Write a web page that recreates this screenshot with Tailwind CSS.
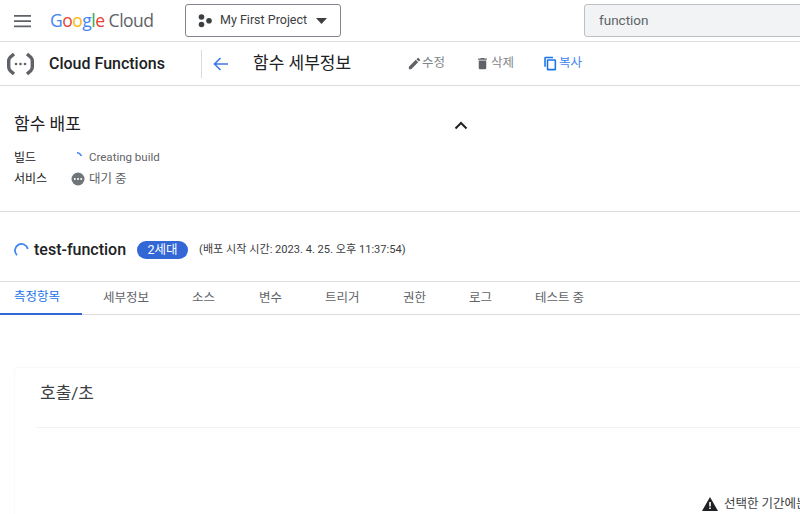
<!DOCTYPE html>
<html lang="ko">
<head>
    <meta charset="UTF-8">
    <title>함수 세부정보</title>
    <script src="https://cdn.jsdelivr.net/npm/@tailwindcss/browser@4"></script>
</head>
<body class="bg-white overflow-hidden h-[514px] w-[800px] text-[#202124] font-['Roboto','Noto_Sans_CJK_KR',sans-serif]">
    <!-- top bar -->
    <header class="h-[42px] border-b border-[#dadce0] flex items-center overflow-hidden">
        <svg class="ml-[14px] w-[18px] h-[14px] shrink-0" viewBox="0 0 18 14"><path fill="#5f6368" d="M0 1h17v1.800H0zM0 6.200h17V8H0zM0 11.400h17v1.800H0z"/></svg>
        <div class="ml-[18px] w-[103px] shrink-0 text-[17.500px] leading-none tracking-[-0.5px] font-['Open_Sans',sans-serif] whitespace-nowrap"><span class="text-[#4285f4]">G</span><span class="text-[#ea4335]">o</span><span class="text-[#fbbc04]">o</span><span class="text-[#4285f4]">g</span><span class="text-[#34a853]">l</span><span class="text-[#ea4335]">e</span><span class="text-[#5f6368]"> Cloud</span></div>
        <button class="ml-[32px] w-[156px] h-[33px] shrink-0 border border-[#80868b] rounded-[3px] flex items-center text-[12.500px] text-[#3c4043]">
            <svg class="ml-[12px] w-[15px] h-[14px]" viewBox="0 0 15 14"><circle cx="3.500" cy="3" r="2.800" fill="#3c4043"/><circle cx="3.500" cy="10.500" r="2.800" fill="#3c4043"/><circle cx="11" cy="6.800" r="2.800" fill="#3c4043"/></svg>
            <span class="ml-[7px]">My First Project</span>
            <svg class="ml-[9px] w-[11px] h-[6px]" viewBox="0 0 11 6"><path fill="#3c4043" d="M0 0h11L5.500 6z"/></svg>
        </button>
        <div class="ml-[243px] w-[240px] h-[33px] shrink-0 bg-[#f1f3f4] border border-[#bdc1c6] rounded-[3px] flex items-center pl-[14px] text-[13.500px] text-[#5f6368]">function</div>
    </header>

    <!-- sub header -->
    <div class="h-[44px] border-b border-[#dadce0] flex items-center">
        <svg class="ml-[7px] w-[27px] h-[24px] shrink-0" viewBox="0 0 27 24"><path fill="none" stroke="#5f6368" stroke-width="3.400" d="M7 2 3 5.500Q1.700 7 1.700 9v6q0 2 1.300 3.500L7 22M20 2l4 3.500q1.300 1.500 1.300 3.500v6q0 2-1.300 3.500L20 22"/><circle cx="9" cy="12" r="1.300" fill="#5f6368"/><circle cx="13.500" cy="12" r="1.300" fill="#5f6368"/><circle cx="18" cy="12" r="1.300" fill="#5f6368"/></svg>
        <div class="ml-[15px] w-[152px] shrink-0 text-[16px] font-medium text-[#202124]">Cloud Functions</div>
        <div class="w-px h-[28px] bg-[#dadce0] shrink-0"></div>
        <svg class="ml-[11px] w-[15px] h-[14px] shrink-0" viewBox="0 0 15 14"><path fill="none" stroke="#3b78e7" stroke-width="1.600" d="M15 7H1.500M7.500 1 1.500 7l6 6"/></svg>
        <div class="ml-[25px] w-[154px] shrink-0 text-[17px] text-[#202124]">함수 세부정보</div>
        <div class="flex items-center text-[12.500px] text-[#80868b]">
            <svg class="w-[15px] h-[15px]" viewBox="0 0 24 24"><path fill="#5f6368" d="M3 17.250V21h3.750L17.810 9.940l-3.750-3.750zM20.710 7.040a1 1 0 0 0 0-1.410l-2.340-2.340a1 1 0 0 0-1.410 0l-1.830 1.830 3.750 3.750z"/></svg>
            <span>수정</span>
        </div>
        <div class="ml-[30px] flex items-center text-[12.500px] text-[#80868b]">
            <svg class="w-[15px] h-[15px]" viewBox="0 0 24 24"><path fill="#5f6368" d="M6 19a2 2 0 0 0 2 2h8a2 2 0 0 0 2-2V7H6zM19 4h-3.500l-1-1h-5l-1 1H5v2h14z"/></svg>
            <span class="ml-px">삭제</span>
        </div>
        <div class="ml-[29px] flex items-center text-[12.500px] text-[#4285f4]">
            <svg class="w-[15px] h-[15px]" viewBox="0 0 24 24"><path fill="#1a73e8" d="M16 1H4a2 2 0 0 0-2 2v14h2.500V3.500H16zm3 4H8a2 2 0 0 0-2 2v14a2 2 0 0 0 2 2h11a2 2 0 0 0 2-2V7a2 2 0 0 0-2-2zm-.500 15.500h-10v-13h10z"/></svg>
            <span class="ml-px">복사</span>
        </div>
    </div>

    <!-- deploy status -->
    <section class="h-[126px] border-b border-[#dadce0] relative pl-[14px] pt-[28px]">
        <div class="flex items-center h-[22px]">
            <h2 class="w-[440px] text-[17px] text-[#202124]">함수 배포</h2>
            <svg class="w-[14px] h-[9px]" viewBox="0 0 14 9"><path fill="none" stroke="#202124" stroke-width="2" d="m1.500 7.500 5.500-5.500 5.500 5.500"/></svg>
        </div>
        <div class="mt-[14px] flex items-center h-[16px] text-[12px]">
            <span class="w-[57px]">빌드</span>
            <svg class="w-[18px] h-[14px]" viewBox="0 0 18 14"><path fill="none" stroke="#4285f4" stroke-width="1.600" d="M6 1.500q3 .5 4.500 3.500"/></svg>
            <span class="text-[#5f6368] text-[11.500px]">Creating build</span>
        </div>
        <div class="mt-[5px] flex items-center h-[16px] text-[12px]">
            <span class="w-[57px]">서비스</span>
            <svg class="w-[14px] h-[14px]" viewBox="0 0 14 14"><circle cx="7" cy="7" r="6.500" fill="#70757a"/><circle cx="3.800" cy="7" r="1" fill="#fff"/><circle cx="7" cy="7" r="1" fill="#fff"/><circle cx="10.200" cy="7" r="1" fill="#fff"/></svg>
            <span class="ml-[4px] text-[12.500px] text-[#5f6368]">대기 중</span>
        </div>
    </section>

    <!-- function title -->
    <div class="h-[69px] flex items-center pl-[14px] pt-[7px]">
        <svg class="w-[15px] h-[15px] shrink-0" viewBox="0 0 15 15"><path fill="none" stroke="#4285f4" stroke-width="1.800" d="M3 12.200A6.500 6.500 0 1 1 13.800 6"/></svg>
        <span class="ml-[5px] text-[16px] font-medium text-[#202124]">test-function</span>
        <span class="ml-[11px] w-[51px] h-[18px] rounded-full bg-[#3367d6] text-white text-[12.500px] flex items-center justify-center">2세대</span>
        <span class="ml-[11px] text-[11.100px] text-[#3c4043]">(배포 시작 시간: 2023. 4. 25. 오후 11:37:54)</span>
    </div>

    <!-- tabs -->
    <nav class="h-[34px] border-y border-[#dadce0] flex text-[12.500px] text-[#5f6368]">
        <a class="w-[82px] pl-[14px] flex items-center border-b-2 border-[#3367d6] text-[#1a73e8] h-[33px]">측정항목</a>
        <a class="w-[110px] pl-[21px] flex items-center">세부정보</a>
        <a class="w-[59px] flex items-center">소스</a>
        <a class="w-[74px] pl-[8px] flex items-center">변수</a>
        <a class="w-[78px] flex items-center">트리거</a>
        <a class="w-[66px] flex items-center">권한</a>
        <a class="w-[66px] flex items-center">로그</a>
        <a class="flex items-center">테스트 중</a>
    </nav>

    <!-- chart card -->
    <section class="relative ml-[14px] mt-[52px] h-[160px] border-l border-t border-[#f8f9fa] rounded-tl-[4px] pl-[21px]">
        <h3 class="h-[60px] w-full border-b border-[#f1f3f4] pl-[4px] pt-[14px] text-[17px] text-[#3c4043] leading-[22px]">호출/초</h3>
        <div class="absolute left-[687px] top-[127px] flex items-center whitespace-nowrap text-[12.500px] text-[#3c4043]">
            <svg class="w-[16px] h-[14px]" viewBox="0 0 16 14"><path fill="#202124" d="M8 0 16 14H0z"/><path fill="#fff" d="M7.200 5h1.600v4.500H7.200zM7.200 10.500h1.600V12H7.200z"/></svg>
            <span class="ml-[6px]">선택한 기간에는</span>
        </div>
    </section>
</body>
</html>
